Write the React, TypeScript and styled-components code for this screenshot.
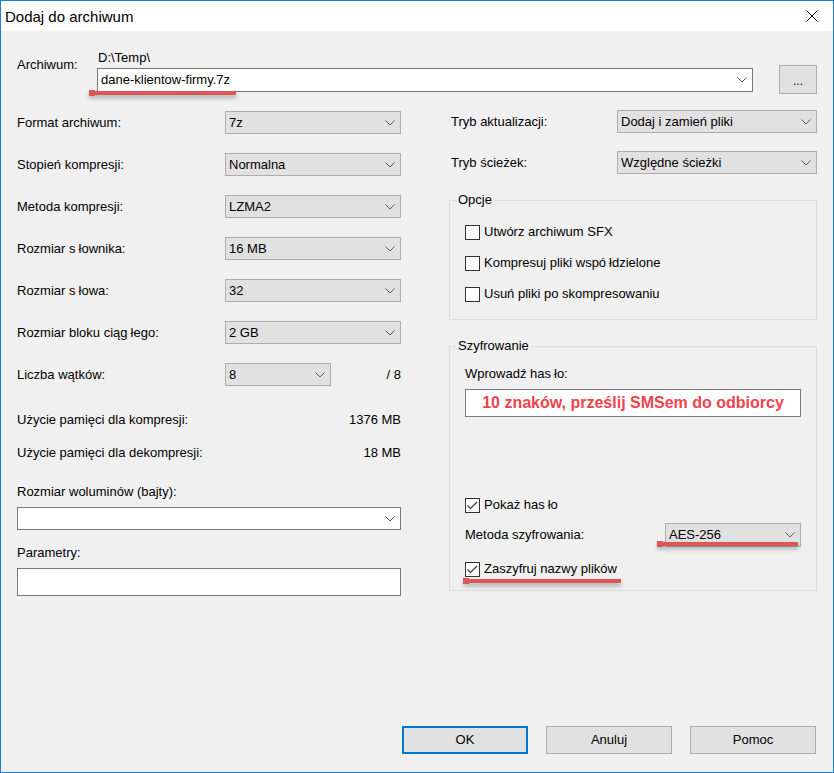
import React from "react";
import styled, { createGlobalStyle } from "styled-components";

const Global = createGlobalStyle`
  html, body { margin: 0; padding: 0; background: #ffffff; }
  body {
    font-family: "Liberation Sans", Arial, sans-serif;
    font-size: 13px;
    color: #000;
  }
  *, *::before, *::after { box-sizing: border-box; }
`;

const Window = styled.div`
  width: 834px;
  height: 773px;
  border: 1px solid #1a7fd4;
  display: flex;
  flex-direction: column;
  background: #f0f0f0;
`;

const TitleBar = styled.div`
  height: 30px;
  flex: none;
  background: #ffffff;
  display: flex;
  align-items: center;
  justify-content: space-between;
  padding: 0 15px 0 4px;
  font-size: 15px;
`;

const CloseIcon = styled.svg`
  display: block;
`;

const Body = styled.div`
  flex: 1;
  display: flex;
  flex-direction: column;
  padding: 0 16px 18px 16px;
  line-height: 16px;
`;

/* ---------- archive path ---------- */

const ArchiveGrid = styled.div`
  margin-top: 19px;
  display: grid;
  grid-template-columns: 80px 656px 1fr 38px;
  grid-template-rows: 15px 24px;
  row-gap: 3px;
`;

const ArchiveLabel = styled.div`
  grid-column: 1;
  grid-row: 1 / 3;
  align-self: start;
  margin-top: 7px;
`;

const PathText = styled.div`
  grid-column: 2;
  grid-row: 1;
  padding-left: 1px;
  line-height: 15px;
`;

const ArchiveField = styled.div`
  grid-column: 2;
  grid-row: 2;
`;

const BrowseButton = styled.div`
  grid-column: 4;
  grid-row: 1 / 3;
  align-self: start;
  margin-top: 15px;
  height: 29px;
  background: #e1e1e1;
  border: 1px solid #adadad;
  display: flex;
  align-items: center;
  justify-content: center;
  padding-top: 2px;
  font-size: 12px;
`;

/* ---------- combo boxes ---------- */

const Combo = styled.div<{ $white?: boolean; $h?: number }>`
  position: relative;
  height: ${(p) => p.$h ?? 23}px;
  background: ${(p) => (p.$white ? "#ffffff" : "#e1e1e1")};
  border: 1px solid ${(p) => (p.$white ? "#7a7a7a" : "#adadad")};
  display: flex;
  align-items: center;
  justify-content: space-between;
  padding: 0 5px 0 3px;
  white-space: nowrap;
`;

const Chevron = styled.svg`
  display: block;
  flex: none;
`;

const ChevronIcon = () => (
  <Chevron width="10" height="6" viewBox="0 0 10 6">
    <polyline points="0.5,0.5 5,5 9.5,0.5" fill="none" stroke="#5a5a5a" strokeWidth="1" />
  </Chevron>
);

const Select = ({
  value,
  white,
  h,
  children,
}: {
  value: string;
  white?: boolean;
  h?: number;
  children?: React.ReactNode;
}) => (
  <Combo $white={white} $h={h}>
    <span>{value}</span>
    <ChevronIcon />
    {children}
  </Combo>
);

const TextBox = styled.div<{ $h: number }>`
  position: relative;
  height: ${(p) => p.$h}px;
  background: #ffffff;
  border: 1px solid #7a7a7a;
  display: flex;
  align-items: center;
  justify-content: center;
`;

const PasswordText = styled.span`
  font-weight: bold;
  font-size: 16px;
  color: #f0434d;
`;

/* red marker strokes drawn over the fields */
const Mark = styled.span<{ $left: number; $top: number; $width: number }>`
  position: absolute;
  left: ${(p) => p.$left}px;
  top: ${(p) => p.$top}px;
  width: ${(p) => p.$width}px;
  height: 4px;
  background: #dc5656;
  box-shadow: 0 3px 4px rgba(0, 0, 0, 0.3);
  &::before {
    content: "";
    position: absolute;
    left: 0;
    top: -1px;
    width: 6px;
    height: 6px;
    background: #dc5656;
  }
`;

/* the "ł" glyph is drawn with a wider left bearing */
const Lw = styled.span`
  padding-left: 3px;
`;

/* ---------- columns ---------- */

const Columns = styled.div`
  margin-top: 18px;
  display: grid;
  grid-template-columns: 384px 368px;
  column-gap: 48px;
  align-items: start;
`;

const LeftCol = styled.div`
  display: flex;
  flex-direction: column;
  padding-top: 1px;
`;

const SelectRows = styled.div`
  display: flex;
  flex-direction: column;
  gap: 19px;
`;

const FieldRow = styled.div<{ $cols: string }>`
  display: grid;
  grid-template-columns: ${(p) => p.$cols};
  align-items: center;
`;

const RightText = styled.div`
  text-align: right;
`;

const MemoryRows = styled.div`
  margin-top: 26px;
  display: flex;
  flex-direction: column;
  gap: 17px;
`;

const MemoryRow = styled.div`
  display: flex;
  justify-content: space-between;
`;

const StackLabel = styled.div<{ $mt: number }>`
  margin-top: ${(p) => p.$mt}px;
`;

const Spaced = styled.div<{ $mt: number }>`
  margin-top: ${(p) => p.$mt}px;
`;

const RightCol = styled.div`
  display: flex;
  flex-direction: column;
`;

const RightRows = styled.div`
  display: flex;
  flex-direction: column;
  gap: 18px;
`;

const RightLabel = styled.div`
  padding-left: 2px;
`;

/* ---------- group boxes ---------- */

const Group = styled.fieldset<{ $mt: number }>`
  margin: ${(p) => p.$mt}px 0 0 0;
  padding: 0;
  border: 1px solid #dcdcdc;
  min-width: 0;
`;

const Legend = styled.legend`
  margin-left: 6px;
  padding: 0 2px;
  line-height: 16px;
`;

const GroupInner = styled.div<{ $pt: number; $pb: number }>`
  padding: ${(p) => p.$pt}px 15px ${(p) => p.$pb}px 15px;
  display: flex;
  flex-direction: column;
`;

const CheckList = styled.div`
  display: flex;
  flex-direction: column;
  gap: 15px;
`;

const CheckRow = styled.div<{ $mt?: number }>`
  position: relative;
  margin-top: ${(p) => p.$mt ?? 0}px;
  height: 16px;
  display: flex;
  align-items: center;
  gap: 4px;
`;

const Box = styled.span`
  width: 15px;
  height: 15px;
  flex: none;
  background: #ffffff;
  border: 1px solid #333333;
  display: flex;
  align-items: center;
  justify-content: center;
`;

const CheckBox = ({ checked }: { checked?: boolean }) => (
  <Box>
    {checked && (
      <svg width="13" height="13" viewBox="0 0 13 13">
        <polyline points="1.5,6.5 4.5,9.5 11,3" fill="none" stroke="#333" strokeWidth="1.1" />
      </svg>
    )}
  </Box>
);

/* ---------- dialog buttons ---------- */

const ButtonRow = styled.div`
  margin-top: auto;
  display: flex;
  justify-content: flex-end;
  gap: 18px;
  padding-right: 1px;
`;

const Button = styled.div<{ $default?: boolean }>`
  width: 126px;
  height: 28px;
  background: #e1e1e1;
  border: ${(p) => (p.$default ? "2px solid #0078d7" : "1px solid #adadad")};
  display: flex;
  align-items: center;
  justify-content: center;
`;

export default function App() {
  return (
    <>
      <Global />
      <Window>
        <TitleBar>
          <span>Dodaj do archiwum</span>
          <CloseIcon width="12" height="12" viewBox="0 0 12 12">
            <line x1="0.5" y1="0.5" x2="11.5" y2="11.5" stroke="#000" strokeWidth="1" />
            <line x1="11.5" y1="0.5" x2="0.5" y2="11.5" stroke="#000" strokeWidth="1" />
          </CloseIcon>
        </TitleBar>
        <Body>
          <ArchiveGrid>
            <ArchiveLabel>Archiwum:</ArchiveLabel>
            <PathText>D:\Temp\</PathText>
            <ArchiveField>
              <Select value="dane-klientow-firmy.7z" white h={24}>
                <Mark $left={-9} $top={22} $width={147} />
              </Select>
            </ArchiveField>
            <BrowseButton>...</BrowseButton>
          </ArchiveGrid>

          <Columns>
            <LeftCol>
              <SelectRows>
                <FieldRow $cols="208px 176px">
                  <span>Format archiwum:</span>
                  <Select value="7z" />
                </FieldRow>
                <FieldRow $cols="208px 176px">
                  <span>Stopień kompresji:</span>
                  <Select value="Normalna" />
                </FieldRow>
                <FieldRow $cols="208px 176px">
                  <span>Metoda kompresji:</span>
                  <Select value="LZMA2" />
                </FieldRow>
                <FieldRow $cols="208px 176px">
                  <span>
                    Rozmiar s<Lw>ł</Lw>ownika:
                  </span>
                  <Select value="16 MB" />
                </FieldRow>
                <FieldRow $cols="208px 176px">
                  <span>
                    Rozmiar s<Lw>ł</Lw>owa:
                  </span>
                  <Select value="32" />
                </FieldRow>
                <FieldRow $cols="208px 176px">
                  <span>
                    Rozmiar bloku ciąg<Lw>ł</Lw>ego:
                  </span>
                  <Select value="2 GB" />
                </FieldRow>
                <FieldRow $cols="208px 106px 1fr">
                  <span>Liczba wątków:</span>
                  <Select value="8" />
                  <RightText>/ 8</RightText>
                </FieldRow>
              </SelectRows>

              <MemoryRows>
                <MemoryRow>
                  <span>Użycie pamięci dla kompresji:</span>
                  <span>1376 MB</span>
                </MemoryRow>
                <MemoryRow>
                  <span>Użycie pamięci dla dekompresji:</span>
                  <span>18 MB</span>
                </MemoryRow>
              </MemoryRows>

              <StackLabel $mt={23}>Rozmiar woluminów (bajty):</StackLabel>
              <Spaced $mt={7}>
                <Select value="" white />
              </Spaced>
              <StackLabel $mt={15}>Parametry:</StackLabel>
              <Spaced $mt={7}>
                <TextBox $h={28} />
              </Spaced>
            </LeftCol>

            <RightCol>
              <RightRows>
                <FieldRow $cols="168px 200px">
                  <RightLabel>Tryb aktualizacji:</RightLabel>
                  <Select value="Dodaj i zamień pliki" />
                </FieldRow>
                <FieldRow $cols="168px 200px">
                  <RightLabel>Tryb ścieżek:</RightLabel>
                  <Select value="Względne ścieżki" />
                </FieldRow>
              </RightRows>

              <Group $mt={18}>
                <Legend>Opcje</Legend>
                <GroupInner $pt={16} $pb={17}>
                  <CheckList>
                    <CheckRow>
                      <CheckBox />
                      <span>Utwórz archiwum SFX</span>
                    </CheckRow>
                    <CheckRow>
                      <CheckBox />
                      <span>
                        Kompresuj pliki wspó<Lw>ł</Lw>dzielone
                      </span>
                    </CheckRow>
                    <CheckRow>
                      <CheckBox />
                      <span>Usuń pliki po skompresowaniu</span>
                    </CheckRow>
                  </CheckList>
                </GroupInner>
              </Group>

              <Group $mt={18}>
                <Legend>Szyfrowanie</Legend>
                <GroupInner $pt={12} $pb={13}>
                  <span>
                    Wprowadź has<Lw>ł</Lw>o:
                  </span>
                  <Spaced $mt={7}>
                    <TextBox $h={28}>
                      <PasswordText>10 znaków, prześlij SMSem do odbiorcy</PasswordText>
                    </TextBox>
                  </Spaced>
                  <CheckRow $mt={80}>
                    <CheckBox checked />
                    <span>
                      Pokaż has<Lw>ł</Lw>o
                    </span>
                  </CheckRow>
                  <Spaced $mt={10}>
                    <FieldRow $cols="200px 136px">
                      <span>Metoda szyfrowania:</span>
                      <Select value="AES-256" h={24}>
                        <Mark $left={-9} $top={18} $width={141} />
                      </Select>
                    </FieldRow>
                  </Spaced>
                  <CheckRow $mt={14}>
                    <CheckBox checked />
                    <span>Zaszyfruj nazwy plików</span>
                    <Mark $left={-2} $top={18} $width={158} />
                  </CheckRow>
                </GroupInner>
              </Group>
            </RightCol>
          </Columns>

          <ButtonRow>
            <Button $default>OK</Button>
            <Button>Anuluj</Button>
            <Button>Pomoc</Button>
          </ButtonRow>
        </Body>
      </Window>
    </>
  );
}
